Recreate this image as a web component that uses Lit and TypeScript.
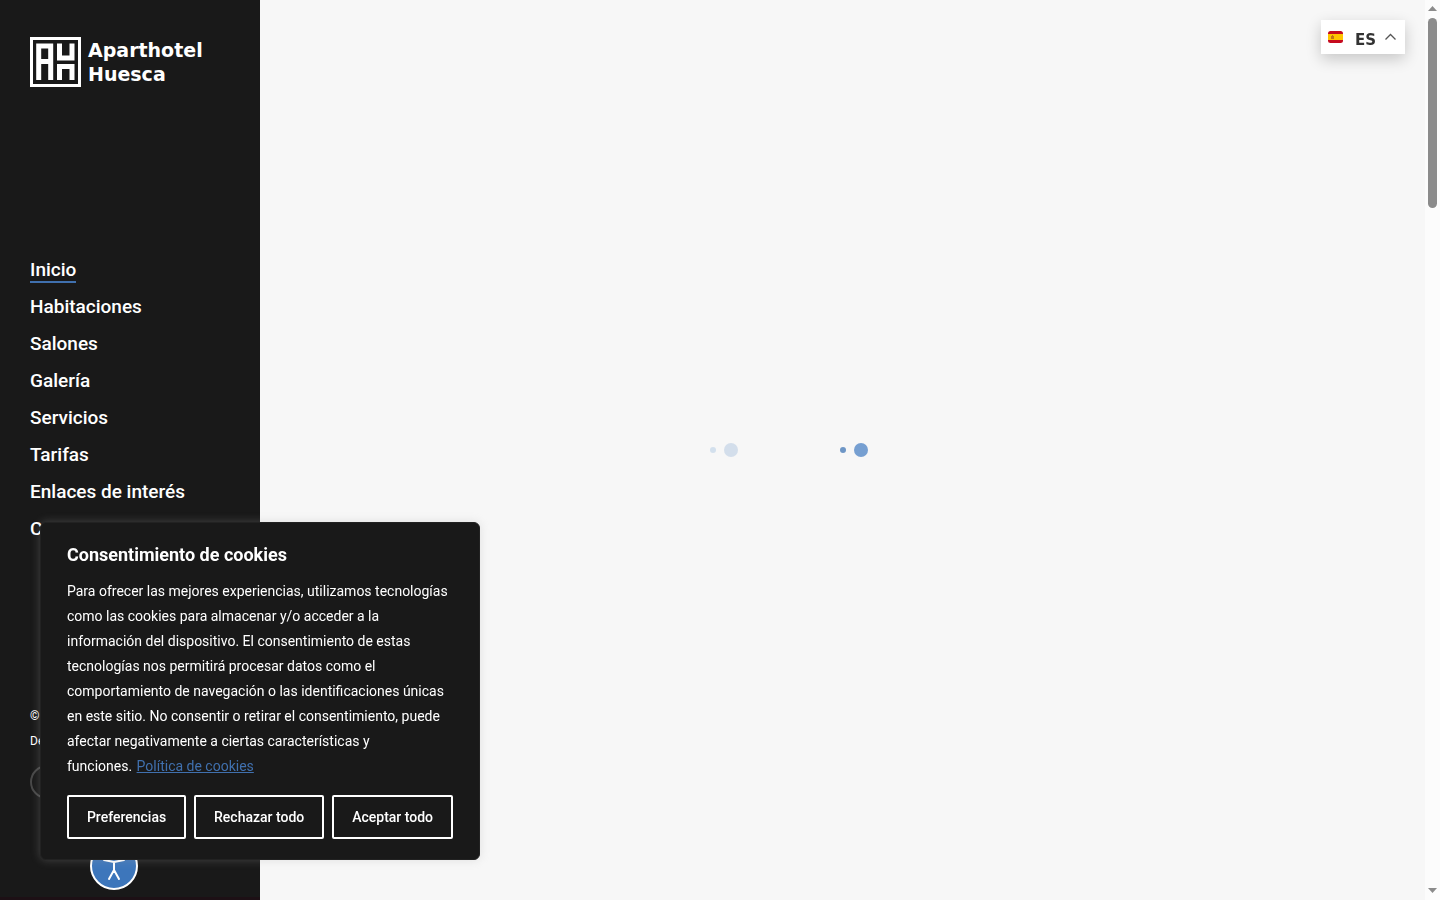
import { LitElement, html, css } from "lit";
import { customElement, state } from "lit/decorators.js";

const NAV = ["Inicio", "Habitaciones", "Salones", "Galería", "Servicios", "Tarifas", "Enlaces de interés", "Contacto"];

@customElement("site-sidebar")
class SiteSidebar extends LitElement {
  static styles = css`
    :host {
      display: flex;
      flex-direction: column;
      justify-content: space-between;
      box-sizing: border-box;
      width: 260px;
      flex: none;
      padding: 37px 30px 98px;
      background: #191919;
      color: #fff;
      border-bottom: 3px solid #1d1015;
    }
    a { color: inherit; text-decoration: none; }
    .logo { display: flex; gap: 7px; padding-bottom: 9px; font: bold 19px/24px "DejaVu Sans", sans-serif; }
    .logo svg { width: 51px; height: 50px; flex: none; }
    .logo span { padding-top: 1px; }
    ul { list-style: none; margin: 0; padding: 0; }
    li { font-size: 19px; font-weight: 500; line-height: 22px; padding: 7px 0 8px; }
    li a { display: inline-block; }
    li a.active { box-shadow: 0 2px 0 #4070ae; }
    p { margin: 0; font-size: 12px; line-height: 25px; white-space: nowrap; }
    .social {
      display: flex; align-items: center; justify-content: center;
      box-sizing: border-box; width: 34px; height: 34px; margin-top: 11px;
      border: 2px solid #484848; border-radius: 50%;
    }
    .social svg { width: 14px; height: 14px; }
  `;
  render() {
    return html`
      <a class="logo" href="#" aria-label="Aparthotel Huesca">
        <svg viewBox="0 0 51 50" aria-hidden="true">
          <rect x="1.5" y="1.5" width="48" height="47" fill="none" stroke="#fff" stroke-width="3" />
          <path d="M8.700 43V9H20.700V43M8.700 24.500H20.700M29.500 6.500v14.500h12.500V6.500M29.500 43V29.500h12.500V43" fill="none" stroke="#fff" stroke-width="5" />
        </svg>
        <span>Aparthotel<br />Huesca</span>
      </a>
      <nav>
        <ul>
          ${NAV.map((n, i) => html`<li><a class=${i === 0 ? "active" : ""} href="#">${n}</a></li>`)}
        </ul>
      </nav>
      <footer>
        <p>© Aparthotel</p>
        <p>Desarrollo</p>
        <a class="social" href="#" aria-label="Facebook">
          <svg viewBox="0 0 14 14"><path d="M10 1H8.500Q6 1 6 4v9M3.500 6H9" fill="none" stroke="#fff" stroke-width="2" /></svg>
        </a>
      </footer>
    `;
  }
}

@customElement("cookie-consent")
class CookieConsent extends LitElement {
  static styles = css`
    :host { display: block; }
    section {
      box-sizing: border-box; width: 440px; padding: 19px 26px 20px;
      border: 1px solid #222; border-radius: 6px;
      background: #191919; color: #fff;
      box-shadow: 0 0 10px rgba(172, 171, 171, 0.3);
    }
    h2 { margin: 0 0 11px; font-size: 18px; line-height: 26px; font-weight: 700; }
    p { margin: 0 0 16px; font-size: 14px; line-height: 25px; }
    p a { color: #4070ae; margin-left: 1px; white-space: nowrap; }
    .actions { display: flex; gap: 8px; }
    button {
      flex: 1 1 auto; height: 44px; padding: 0; border: 2px solid #fff; border-radius: 2px;
      background: transparent; color: #fff; font: 500 14px/24px Roboto, sans-serif; white-space: nowrap;
    }
  `;
  render() {
    return html`
      <section role="dialog" aria-labelledby="title">
        <h2 id="title">Consentimiento de cookies</h2>
        <p>Para ofrecer las mejores experiencias, utilizamos tecnologías como las cookies para almacenar y/o acceder a la información del dispositivo. El consentimiento de estas tecnologías nos permitirá procesar datos como el comportamiento de navegación o las identificaciones únicas en este sitio. No consentir o retirar el consentimiento, puede afectar negativamente a ciertas características y funciones.&nbsp;<a href="#">Política de cookies</a></p>
        <div class="actions">
          <button type="button">Preferencias</button>
          <button type="button">Rechazar todo</button>
          <button type="button">Aceptar todo</button>
        </div>
      </section>
    `;
  }
}

@customElement("language-switch")
class LanguageSwitch extends LitElement {
  static styles = css`
    :host { display: block; }
    button {
      display: flex; align-items: center; height: 34px; padding: 0 8px 0 7px; border: 0;
      background: #fff; color: #333; box-shadow: 0 5px 15px rgba(0, 0, 0, 0.2);
      font: bold 15px/20px "DejaVu Sans", sans-serif;
    }
    .flag { width: 15px; height: 12px; margin-right: 12px; }
    span { padding-top: 6px; }
    .chevron { width: 13px; height: 8px; margin-left: 8px; }
  `;
  render() {
    return html`
      <button type="button" aria-label="Idioma: ES">
        <svg class="flag" viewBox="0 0 15 12">
          <clipPath id="r"><rect width="15" height="12" rx="2.500" /></clipPath>
          <g clip-path="url(#r)">
            <path fill="#c60b1e" d="M0 0h15v12H0z" />
            <path fill="#ffc400" d="M0 3h15v6H0z" />
            <path fill="#ad5b20" d="M3 5h1v-1h1v1h1v3H3z" opacity=".75" />
          </g>
        </svg>
        <span>ES</span>
        <svg class="chevron" viewBox="0 0 13 8"><path d="M1.500 6.500l5-5 5 5" fill="none" stroke="#555" stroke-width="1.300" /></svg>
      </button>
    `;
  }
}

@customElement("app-root")
class AppRoot extends LitElement {
  @state() private dots = [
    { size: 6, color: "#d3e0ed" },
    { size: 14, color: "#d3deeb" },
    { size: 6, color: "#6e96c6" },
    { size: 14, color: "#769fd1" },
  ];
  static styles = css`
    :host { display: flex; min-height: 100vh; background: #f7f7f7; font-family: Roboto, sans-serif; }
    main { flex: 1; display: flex; align-items: center; justify-content: center; }
    .loader { display: flex; align-items: center; padding-right: 107px; }
    .pair { display: flex; align-items: center; gap: 8px; }
    .pair + .pair { margin-left: 102px; }
    .dot { border-radius: 50%; }
    .scroll {
      display: flex; flex-direction: column; align-items: center; box-sizing: border-box;
      width: 15px; padding: 6px 0 7px; background: #fcfcfc;
    }
    .thumb { width: 9px; height: 190px; margin-top: 7px; border-radius: 5px; background: #8b8b8b; }
    .arrow { width: 9px; height: 5px; fill: #8b8b8b; }
    .down { margin-top: auto; }
    language-switch { position: fixed; top: 20px; right: 35px; }
    cookie-consent { position: fixed; left: 40px; bottom: 40px; }
    .access {
      position: fixed; left: 90px; bottom: 10px; width: 48px; height: 48px; padding: 0;
      border: 2px solid #fff; border-radius: 50%; background: #3d76bb;
    }
    .access svg { display: block; width: 44px; height: 44px; }
  `;
  render() {
    const dot = (d: { size: number; color: string }) =>
      html`<span class="dot" style="width:${d.size}px;height:${d.size}px;background:${d.color}"></span>`;
    return html`
      <site-sidebar></site-sidebar>
      <main>
        <div class="loader" role="status" aria-label="Cargando">
          <div class="pair">${this.dots.slice(0, 2).map(dot)}</div>
          <div class="pair">${this.dots.slice(2).map(dot)}</div>
        </div>
      </main>
      <div class="scroll" aria-hidden="true">
        <svg class="arrow" viewBox="0 0 9 5"><path d="M4.500 0L9 5H0z" /></svg>
        <div class="thumb"></div>
        <svg class="arrow down" viewBox="0 0 9 5"><path d="M0 0h9L4.500 5z" /></svg>
      </div>
      <button class="access" type="button" aria-label="Accesibilidad">
        <svg viewBox="0 0 44 44" fill="none" stroke="#fff" stroke-width="2" stroke-linecap="round" stroke-linejoin="round">
          <circle cx="22" cy="10" r="3" />
          <path d="M12 16l10 2 10-2M22 18v8M22 26l-5 9M22 26l5 9" />
        </svg>
      </button>
      <language-switch></language-switch>
      <cookie-consent></cookie-consent>
    `;
  }
}
